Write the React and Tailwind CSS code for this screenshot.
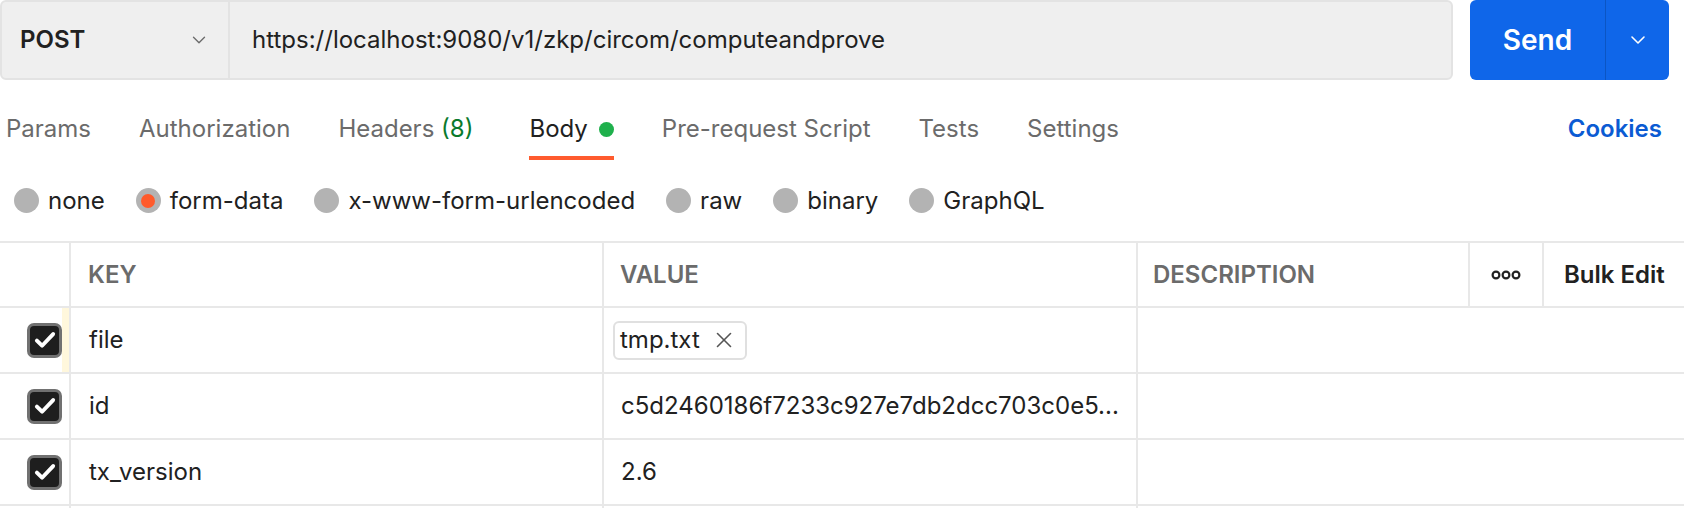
import { ChevronDown, X } from 'lucide-react';

const tabs = [
  { label: 'Params' },
  { label: 'Authorization' },
  { label: 'Headers', count: '(8)' },
  { label: 'Body', active: true },
  { label: 'Pre-request Script' },
  { label: 'Tests' },
  { label: 'Settings' },
];

const bodyTypes = ['none', 'form-data', 'x-www-form-urlencoded', 'raw', 'binary', 'GraphQL'];

const rows = [
  { key: 'file', file: 'tmp.txt', marked: true },
  { key: 'id', value: 'c5d2460186f7233c927e7db2dcc703c0e5...' },
  { key: 'tx_version', value: '2.6' },
];

const Checkbox = () => (
  <div className="w-[35px] h-[35px] rounded-[7px] border-[3px] border-[#717171] bg-[#1e1e1e] flex items-center justify-center">
    <svg width="26" height="26" viewBox="0 0 24 24" fill="none" stroke="white" strokeWidth="3.6" strokeLinecap="round" strokeLinejoin="round">
      <path d="M4.5 12.5l4.8 4.8L19.5 6.5" />
    </svg>
  </div>
);

const Dots = () => (
  <svg width="30" height="10" viewBox="0 0 30 10" fill="none" stroke="#212121" strokeWidth="2.2">
    <circle cx="5" cy="5" r="3.4" />
    <circle cx="15" cy="5" r="3.4" />
    <circle cx="25" cy="5" r="3.4" />
  </svg>
);

export default function App() {
  return (
    <div className="w-[1684px] h-[508px] overflow-hidden bg-white font-['Inter',sans-serif] text-[#212121]">
      {/* Request bar */}
      <div className="flex h-[80px]">
        <div className="w-[1453px] flex rounded-[6px] border-2 border-[#e3e3e3] bg-[#efefef]">
          <div className="w-[228px] flex items-center justify-between pl-[18px] pr-[18px] border-r-2 border-[#e3e3e3]">
            <span className="text-[24px] font-semibold">POST</span>
            <ChevronDown size={22} strokeWidth={1.5} className="text-[#6b6b6b]" />
          </div>
          <div className="flex items-center pl-[22px] text-[24px]">https://localhost:9080/v1/zkp/circom/computeandprove</div>
        </div>
        <div className="ml-[17px] w-[199px] flex rounded-[6px] bg-[#0f66e9] text-white">
          <div className="w-[135px] flex items-center justify-center text-[28px] font-semibold">Send</div>
          <div className="w-px bg-[#0b55c4]" />
          <div className="flex-1 flex items-center justify-center">
            <ChevronDown size={24} strokeWidth={1.6} />
          </div>
        </div>
      </div>

      {/* Tabs */}
      <div className="flex items-stretch h-[80px] pl-[6px] pr-[22px]">
        <div className="flex gap-[48px]">
          {tabs.map((t) => (
            <div
              key={t.label}
              className={`flex items-center gap-[11px] pt-[22px] border-b-4 text-[24px] ${t.active ? 'ml-[8px] border-[#ff5b2e] text-[#212121]' : 'border-transparent text-[#6b6b6b]'}`}
            >
              <span>
                {t.label}
                {t.count && <span className="text-[#0a7a2c]"> {t.count}</span>}
              </span>
              {t.active && <span className="w-[15px] h-[15px] rounded-full bg-[#1fb04c]" />}
            </div>
          ))}
        </div>
        <div className="ml-auto flex items-center pt-[22px] pb-[4px] text-[24px] font-semibold text-[#0b5bd3]">Cookies</div>
      </div>

      {/* Body type */}
      <div className="flex items-center h-[81px] pl-[14px] gap-[31px]">
        {bodyTypes.map((b) => (
          <div key={b} className="flex items-center gap-[9px] text-[24px]">
            <span className="w-[25px] h-[25px] rounded-full bg-[#b3b3b3] flex items-center justify-center">
              {b === 'form-data' && <span className="w-[14px] h-[14px] rounded-full bg-[#ff5a2b]" />}
            </span>
            <span>{b}</span>
          </div>
        ))}
      </div>

      {/* Table */}
      <div className="border-t-2 border-[#e8e8e8]">
        <div className="flex h-[65px] border-b-2 border-[#e8e8e8] text-[24px] font-semibold text-[#6b6b6b]">
          <div className="w-[71px] border-r-2 border-[#e8e8e8]" />
          <div className="w-[533px] border-r-2 border-[#e8e8e8] flex items-center pl-[17px]">KEY</div>
          <div className="w-[534px] border-r-2 border-[#e8e8e8] flex items-center pl-[16px]">VALUE</div>
          <div className="w-[332px] border-r-2 border-[#e8e8e8] flex items-center pl-[15px]">DESCRIPTION</div>
          <div className="w-[74px] border-r-2 border-[#e8e8e8] flex items-center justify-center">
            <Dots />
          </div>
          <div className="flex-1 flex items-center pl-[20px] text-[#212121]">Bulk Edit</div>
        </div>
        {rows.map((r) => (
          <div key={r.key} className="flex h-[66px] border-b-2 border-[#e8e8e8] text-[24px]">
            <div className="w-[71px] border-r-2 border-[#e8e8e8] flex items-center">
              <div className="ml-[27px]">
                <Checkbox />
              </div>
              <div className={`ml-auto w-[7px] self-stretch ${r.marked ? 'bg-[#fff7dc]' : ''}`} />
            </div>
            <div className="w-[533px] border-r-2 border-[#e8e8e8] flex items-center pl-[18px]">{r.key}</div>
            <div className="w-[534px] border-r-2 border-[#e8e8e8] flex items-center pl-[9px]">
              {r.file ? (
                <div className="flex items-center gap-[11px] h-[39px] pl-[5px] pr-[8px] rounded-[6px] border-2 border-[#e0e0e0]">
                  <span>{r.file}</span>
                  <X size={26} strokeWidth={1.5} className="text-[#555]" />
                </div>
              ) : (
                <span className="pl-[8px]">{r.value}</span>
              )}
            </div>
            <div className="flex-1" />
          </div>
        ))}
        <div className="flex h-[20px]">
          <div className="w-[71px] border-r-2 border-[#e8e8e8]" />
          <div className="w-[533px] border-r-2 border-[#e8e8e8]" />
          <div className="w-[534px] border-r-2 border-[#e8e8e8]" />
        </div>
      </div>
    </div>
  );
}
